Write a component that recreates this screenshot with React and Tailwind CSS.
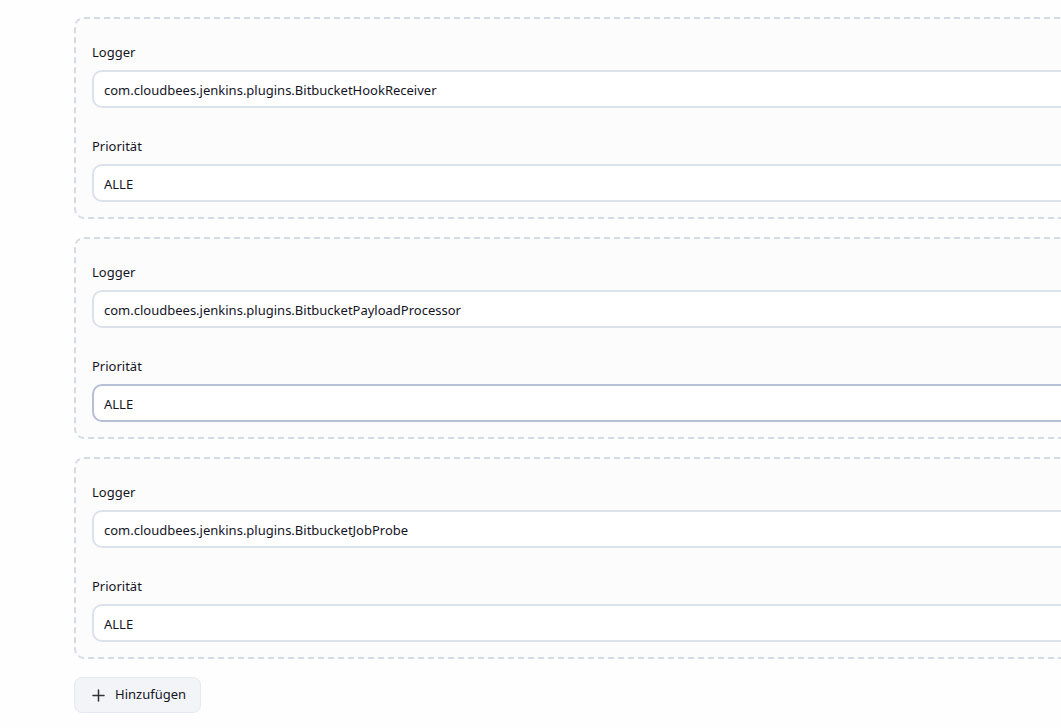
import React from "react";

const entries = [
  { logger: "com.cloudbees.jenkins.plugins.BitbucketHookReceiver", hover: false },
  { logger: "com.cloudbees.jenkins.plugins.BitbucketPayloadProcessor", hover: true },
  { logger: "com.cloudbees.jenkins.plugins.BitbucketJobProbe", hover: false },
];

function Field({ label, value, hover, last }) {
  return (
    <div className={last ? "" : "mb-[28px]"}>
      <div className="h-[20px] leading-[20px] text-[13px] text-[#14141f]">{label}</div>
      <div
        className={`mt-[8px] h-[38px] rounded-[10px] border-2 bg-white pl-[10px] pt-[3px] flex items-center text-[13px] text-[#14141f] ${
          hover ? "border-[#b5bfd5]" : "border-[#dce2eb]"
        }`}
      >
        {value}
      </div>
    </div>
  );
}

export default function App() {
  return (
    <div
      className="min-h-[728px] w-[1061px] overflow-hidden bg-[#fefefe] pl-[74px] pt-[17px]"
      style={{ fontFamily: '"Noto Sans", "Open Sans", sans-serif' }}
    >
      <div className="w-[1100px] flex flex-col gap-[18px]">
        {entries.map((e, i) => (
          <div
            key={i}
            className="rounded-[10px] border-2 border-dashed border-[#d5dbe5] bg-[#fcfcfd] px-[16px] pt-[23px] pb-[15px]"
          >
            <Field label="Logger" value={e.logger} />
            <Field label="Priorität" value="ALLE" hover={e.hover} last />
          </div>
        ))}
      </div>
      <button className="mt-[18px] h-[36px] w-[127px] rounded-[8px] border border-[#e6e9ee] bg-[#f2f4f7] flex items-center pl-[17px] gap-[10px] text-[13px] text-[#14141f]">
        <svg width="13" height="13" viewBox="0 0 13 13" fill="none" stroke="#333" strokeWidth="1.5" strokeLinecap="round">
          <path d="M6.5 1v11M1 6.5h11" />
        </svg>
        Hinzufügen
      </button>
    </div>
  );
}
